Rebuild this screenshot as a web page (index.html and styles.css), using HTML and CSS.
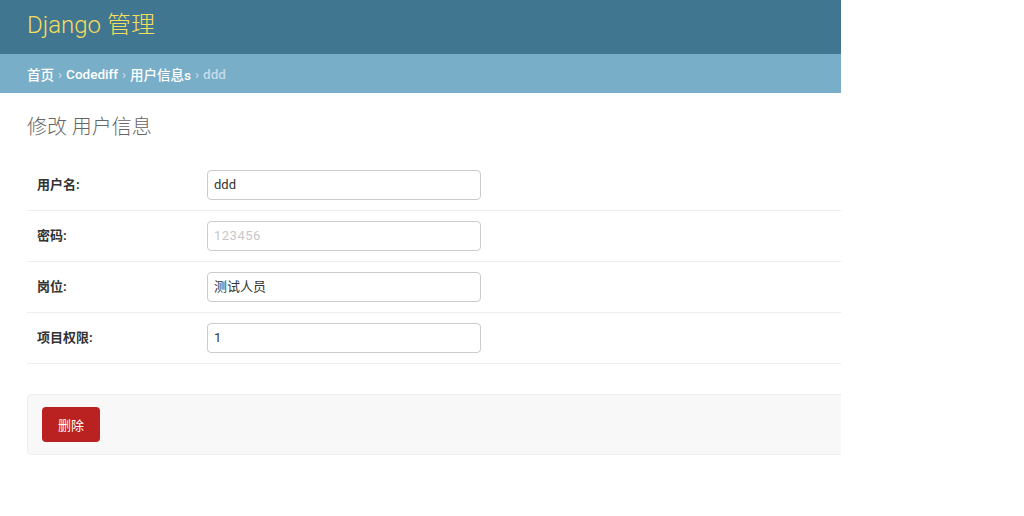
FILE: index.html
```html
<!DOCTYPE html>
<html lang="zh">
<head>
<meta charset="utf-8">
<title>修改 用户信息</title>
<link rel="stylesheet" href="styles.css">
</head>
<body>
<div class="page">
  <header class="header">
    <div class="branding">Django 管理</div>
  </header>
  <nav class="breadcrumbs">
    <a href="#">首页</a><span class="sep">›</span><a href="#">Codediff</a><span class="sep">›</span><a href="#">用户信息s</a><span class="sep">›</span><span class="current">ddd</span>
  </nav>
  <main class="content">
    <h1 class="title">修改 用户信息</h1>
    <form class="form">
      <div class="row">
        <label class="label">用户名:</label>
        <div class="input">ddd</div>
      </div>
      <div class="row">
        <label class="label">密码:</label>
        <div class="input masked">123456</div>
      </div>
      <div class="row">
        <label class="label">岗位:</label>
        <div class="input">测试人员</div>
      </div>
      <div class="row">
        <label class="label">项目权限:</label>
        <div class="input">1</div>
      </div>
      <div class="submit-row">
        <button type="button" class="delete">删除</button>
      </div>
    </form>
  </main>
</div>
</body>
</html>
```
FILE: styles.css
```css
html, body {
  margin: 0;
  padding: 0;
  background: #fff;
}
body {
  font-family: Roboto, "Noto Sans CJK SC", sans-serif;
  color: #333;
  overflow: hidden;
}
.page {
  width: 841px;
  overflow: hidden;
}
.header {
  background: #417690;
  height: 54px;
  padding: 0 27px;
  display: flex;
  align-items: center;
}
.branding {
  color: #f5dd5d;
  font-size: 24px;
  font-weight: 300;
  line-height: 30px;
  margin-top: -4px;
}
.breadcrumbs {
  background: #79aec8;
  height: 39px;
  padding: 0 27px;
  display: flex;
  align-items: center;
  font-size: 13.5px;
  font-weight: 500;
  color: #c4dce8;
}
.breadcrumbs a {
  color: #fff;
  text-decoration: none;
}
.breadcrumbs .sep {
  margin: 0 4px;
  color: #c4dce8;
}
.breadcrumbs .current {
  color: #c4dce8;
}
.content {
  padding: 22px 0 0 27px;
}
.title {
  margin: 0 0 21px;
  font-size: 20px;
  line-height: 24px;
  font-weight: 300;
  color: #666;
}
.form {
  width: 840px;
}
.row {
  display: flex;
  align-items: center;
  padding: 10px;
  border-bottom: 1px solid #eee;
}
.label {
  width: 170px;
  font-size: 13px;
  font-weight: 700;
  color: #333;
  margin-top: -3px;
}
.input {
  box-sizing: border-box;
  width: 274px;
  height: 30px;
  border: 1px solid #ccc;
  border-radius: 4px;
  padding: 0 6px;
  font-size: 13px;
  line-height: 28px;
  color: #333;
}
.input.masked {
  color: #c8c8c8;
  letter-spacing: 0.5px;
}
.submit-row {
  margin-top: 30px;
  background: #f8f8f8;
  border: 1px solid #eee;
  border-radius: 4px;
  padding: 12px 14px;
}
.delete {
  display: block;
  height: 35px;
  width: 58px;
  border: none;
  border-radius: 4px;
  background: #ba2121;
  color: #fff;
  font-family: Roboto, "Noto Sans CJK SC", sans-serif;
  font-size: 13px;
  padding: 0;
}
```
